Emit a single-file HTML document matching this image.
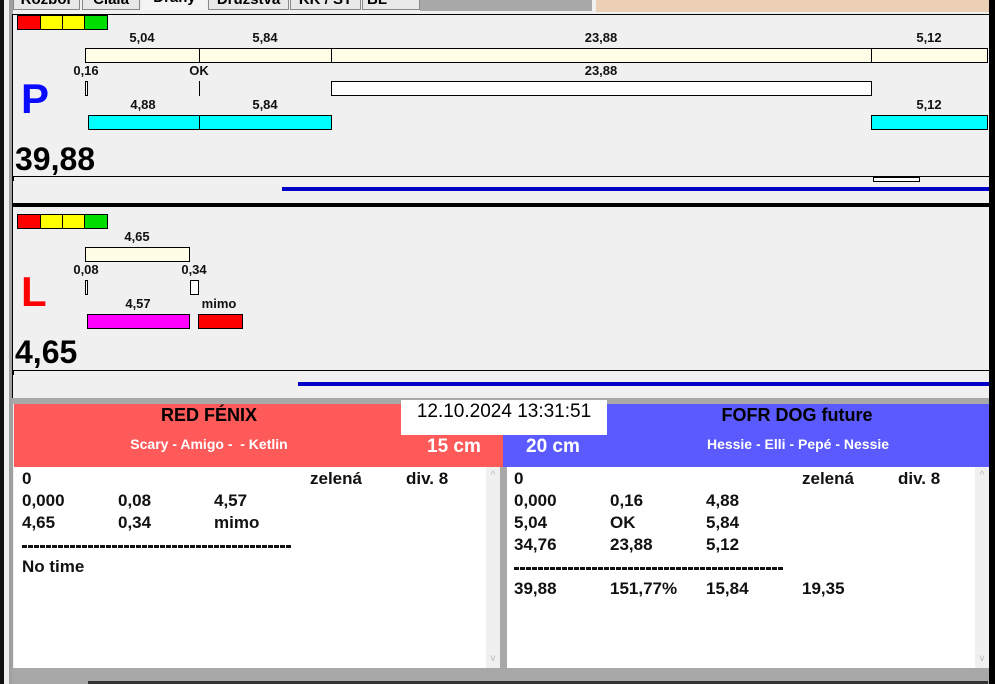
<!DOCTYPE html>
<html><head><meta charset="utf-8"><style>
*{margin:0;padding:0;box-sizing:border-box}
body{width:995px;height:684px;overflow:hidden;background:#f0f0f0;position:relative;font-family:"Liberation Sans",Arial,sans-serif}
.a{position:absolute}
.b{position:absolute;border:1px solid #000}
.t{position:absolute;font-weight:bold;font-size:13px;color:#111;transform:translateX(-50%);white-space:nowrap}
.x{position:absolute;font-weight:bold;font-size:17px;color:#111;white-space:nowrap}
.d{position:absolute;height:3px;background:repeating-linear-gradient(90deg,#111 0 5px,#fff 5px 6px)}
</style></head><body>
<!-- frame -->
<div class="a" style="left:0;top:0;width:4px;height:684px;background:#111"></div>
<div class="a" style="left:9px;top:0;width:4px;height:684px;background:#a0a0a0"></div>
<div class="a" style="left:989px;top:0;width:6px;height:684px;background:#000"></div>
<!-- tabs -->
<div class="a" style="left:13px;top:0;width:976px;height:14px;background:#f0f0f0"></div>
<div class="a" style="left:420px;top:0;width:172px;height:11px;background:#a8a8a8"></div>
<div class="a" style="left:596px;top:0;width:393px;height:12px;background:#ecd0b6"></div>
<div class="a" style="left:13px;top:-10px;width:67px;height:20px;border:1px solid #888;background:#e8e8e8;font-size:15px;font-weight:bold;text-align:center">Rozbor</div>
<div class="a" style="left:82px;top:-10px;width:58px;height:20px;border:1px solid #888;background:#e8e8e8;font-size:15px;font-weight:bold;text-align:center">Ciala</div>
<div class="a" style="left:142px;top:-11px;width:65px;height:21px;background:#f4f4f4;font-size:15px;font-weight:bold;text-align:center">Dráhy</div>
<div class="a" style="left:208px;top:-10px;width:81px;height:20px;border:1px solid #888;background:#e8e8e8;font-size:15px;font-weight:bold;text-align:center">Družstva</div>
<div class="a" style="left:290px;top:-10px;width:71px;height:20px;border:1px solid #888;background:#e8e8e8;font-size:15px;font-weight:bold;text-align:center">KK / ST</div>
<div class="a" style="left:362px;top:-10px;width:58px;height:20px;border:1px solid #888;background:#e8e8e8;font-size:15px;font-weight:bold;text-align:left;padding-left:4px">BL</div>

<!-- panel P -->
<div class="a" style="left:12px;top:14px;width:977px;height:1px;background:#000"></div>
<div class="a" style="left:12px;top:14px;width:1px;height:390px;background:#000"></div>
<div class="b" style="left:17px;top:15px;width:24px;height:15px;background:#f00"></div>
<div class="b" style="left:40px;top:15px;width:23px;height:15px;background:#ff0"></div>
<div class="b" style="left:62px;top:15px;width:23px;height:15px;background:#ff0"></div>
<div class="b" style="left:84px;top:15px;width:24px;height:15px;background:#0d0"></div>
<div class="t" style="left:142px;top:30px">5,04</div>
<div class="t" style="left:265px;top:30px">5,84</div>
<div class="t" style="left:601px;top:30px">23,88</div>
<div class="t" style="left:929px;top:30px">5,12</div>
<div class="b" style="left:85px;top:48px;width:115px;height:15px;background:#fffde6"></div>
<div class="b" style="left:199px;top:48px;width:133px;height:15px;background:#fffde6"></div>
<div class="b" style="left:331px;top:48px;width:541px;height:15px;background:#fffde6"></div>
<div class="b" style="left:871px;top:48px;width:117px;height:15px;background:#fffde6"></div>
<div class="t" style="left:86px;top:63px">0,16</div>
<div class="t" style="left:199px;top:63px">OK</div>
<div class="t" style="left:601px;top:63px">23,88</div>
<div class="b" style="left:85px;top:81px;width:3px;height:15px;background:#fff"></div>
<div class="a" style="left:199px;top:81px;width:1px;height:15px;background:#000"></div>
<div class="b" style="left:331px;top:81px;width:541px;height:15px;background:#fff"></div>
<div class="t" style="left:143px;top:97px">4,88</div>
<div class="t" style="left:265px;top:97px">5,84</div>
<div class="t" style="left:929px;top:97px">5,12</div>
<div class="b" style="left:88px;top:115px;width:112px;height:15px;background:#0ff"></div>
<div class="b" style="left:199px;top:115px;width:133px;height:15px;background:#0ff"></div>
<div class="b" style="left:871px;top:115px;width:117px;height:15px;background:#0ff"></div>
<div class="a" style="left:21px;top:75px;font-size:42px;font-weight:bold;color:#0a0aff">P</div>
<div class="a" style="left:15px;top:141px;font-size:32px;font-weight:bold;color:#000">39,88</div>
<div class="a" style="left:13px;top:176px;width:976px;height:1px;background:#000"></div>
<div class="a" style="left:13px;top:177px;width:1px;height:4px;background:#000"></div>
<div class="b" style="left:873px;top:177px;width:47px;height:5px;background:#fff"></div>
<div class="a" style="left:282px;top:187px;width:707px;height:4px;background:#0000c8"></div>
<div class="a" style="left:12px;top:203px;width:977px;height:4px;background:#000"></div>

<!-- panel L -->
<div class="b" style="left:17px;top:214px;width:24px;height:15px;background:#f00"></div>
<div class="b" style="left:40px;top:214px;width:23px;height:15px;background:#ff0"></div>
<div class="b" style="left:62px;top:214px;width:23px;height:15px;background:#ff0"></div>
<div class="b" style="left:84px;top:214px;width:24px;height:15px;background:#0d0"></div>
<div class="t" style="left:137px;top:229px">4,65</div>
<div class="b" style="left:85px;top:247px;width:105px;height:15px;background:#fffde6"></div>
<div class="t" style="left:86px;top:262px">0,08</div>
<div class="t" style="left:194px;top:262px">0,34</div>
<div class="b" style="left:85px;top:280px;width:3px;height:15px;background:#fff"></div>
<div class="b" style="left:190px;top:280px;width:9px;height:15px;background:#fff"></div>
<div class="t" style="left:138px;top:296px">4,57</div>
<div class="t" style="left:219px;top:296px">mimo</div>
<div class="b" style="left:87px;top:314px;width:103px;height:15px;background:#f0f"></div>
<div class="b" style="left:198px;top:314px;width:45px;height:15px;background:#f00"></div>
<div class="a" style="left:21px;top:268px;font-size:42px;font-weight:bold;color:#f00">L</div>
<div class="a" style="left:15px;top:334px;font-size:32px;font-weight:bold;color:#000">4,65</div>
<div class="a" style="left:13px;top:370px;width:976px;height:1px;background:#000"></div>
<div class="a" style="left:13px;top:371px;width:1px;height:4px;background:#000"></div>
<div class="a" style="left:298px;top:382px;width:691px;height:4px;background:#0000c8"></div>
<div class="a" style="left:12px;top:398px;width:977px;height:6px;background:#a8a8a8"></div>

<!-- bottom headers -->
<div class="a" style="left:14px;top:404px;width:489px;height:63px;background:#ff5a5a"></div>
<div class="a" style="left:503px;top:404px;width:486px;height:63px;background:#5a5aff"></div>
<div class="a" style="left:401px;top:400px;width:206px;height:35px;background:#fff"></div>
<div class="a" style="left:401px;top:401px;width:206px;text-align:center;font-size:19px;color:#000">12.10.2024 13:31:51</div>
<div class="t" style="left:209px;top:405px;font-size:18px;color:#000">RED FÉNIX</div>
<div class="t" style="left:209px;top:436px;font-size:14px;color:#fff">Scary - Amigo - &nbsp;- Ketlin</div>
<div class="a" style="left:427px;top:436px;font-size:19px;font-weight:bold;color:#fff">15 cm</div>
<div class="a" style="left:526px;top:436px;font-size:19px;font-weight:bold;color:#fff">20 cm</div>
<div class="t" style="left:797px;top:405px;font-size:18px;color:#000">FOFR DOG future</div>
<div class="t" style="left:798px;top:436px;font-size:14px;color:#fff">Hessie - Elli - Pepé - Nessie</div>

<!-- text panels -->
<div class="a" style="left:14px;top:467px;width:486px;height:201px;background:#fff"></div>
<div class="a" style="left:486px;top:467px;width:14px;height:201px;background:#f0f0f0;color:#bbb;font-size:10px;text-align:center;line-height:18px">^<div style="position:absolute;bottom:0;width:14px">v</div></div>
<div class="a" style="left:500px;top:467px;width:7px;height:201px;background:#a8a8a8"></div>
<div class="a" style="left:507px;top:467px;width:482px;height:201px;background:#fff"></div>
<div class="a" style="left:975px;top:467px;width:14px;height:201px;background:#f0f0f0;color:#bbb;font-size:10px;text-align:center;line-height:18px">^<div style="position:absolute;bottom:0;width:14px">v</div></div>
<div class="a" style="left:12px;top:668px;width:977px;height:16px;background:#a8a8a8"></div>
<div class="a" style="left:88px;top:681px;width:900px;height:3px;background:#333"></div>

<div class="x" style="left:22px;top:469px">0</div><div class="x" style="left:310px;top:469px">zelená</div><div class="x" style="left:406px;top:469px">div. 8</div>
<div class="x" style="left:22px;top:491px">0,000</div><div class="x" style="left:118px;top:491px">0,08</div><div class="x" style="left:214px;top:491px">4,57</div>
<div class="x" style="left:22px;top:513px">4,65</div><div class="x" style="left:118px;top:513px">0,34</div><div class="x" style="left:214px;top:513px">mimo</div>
<div class="d" style="left:22px;top:545px;width:270px"></div>
<div class="x" style="left:22px;top:557px">No time</div>

<div class="x" style="left:514px;top:469px">0</div><div class="x" style="left:802px;top:469px">zelená</div><div class="x" style="left:898px;top:469px">div. 8</div>
<div class="x" style="left:514px;top:491px">0,000</div><div class="x" style="left:610px;top:491px">0,16</div><div class="x" style="left:706px;top:491px">4,88</div>
<div class="x" style="left:514px;top:513px">5,04</div><div class="x" style="left:610px;top:513px">OK</div><div class="x" style="left:706px;top:513px">5,84</div>
<div class="x" style="left:514px;top:535px">34,76</div><div class="x" style="left:610px;top:535px">23,88</div><div class="x" style="left:706px;top:535px">5,12</div>
<div class="d" style="left:514px;top:567px;width:270px"></div>
<div class="x" style="left:514px;top:579px">39,88</div><div class="x" style="left:610px;top:579px">151,77%</div><div class="x" style="left:706px;top:579px">15,84</div><div class="x" style="left:802px;top:579px">19,35</div>
</body></html>
